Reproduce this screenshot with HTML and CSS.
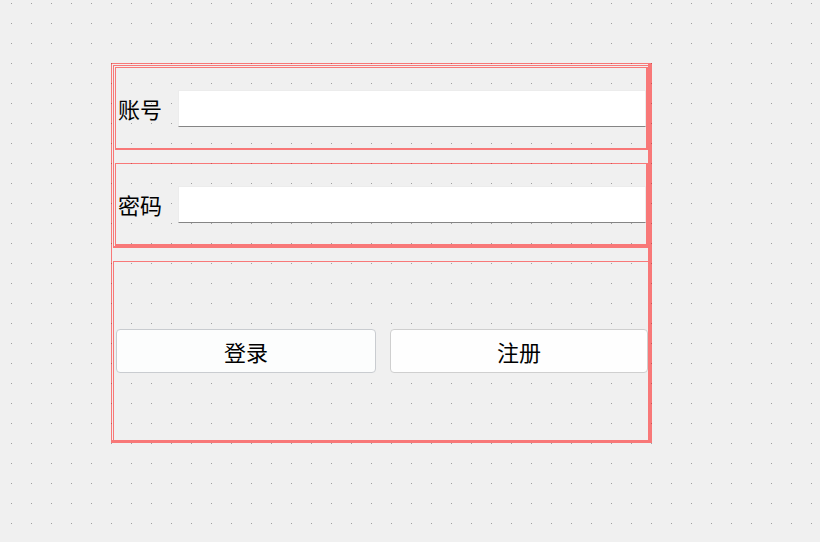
FILE: index.html
```html
<!DOCTYPE html>
<html lang="zh-CN">
<head>
<meta charset="utf-8">
<title>登录</title>
<link rel="stylesheet" href="styles.css">
</head>
<body>
<div class="form">
  <div class="group">
    <div class="row">
      <span class="label">账号</span>
      <input class="field" type="text">
    </div>
    <div class="row">
      <span class="label">密码</span>
      <input class="field" type="password">
    </div>
  </div>
  <div class="actions">
    <button class="btn btn-login" type="button">登录</button>
    <button class="btn btn-register" type="button">注册</button>
  </div>
</div>
</body>
</html>
```
FILE: styles.css
```css
html, body {
  margin: 0;
  padding: 0;
}
body {
  width: 820px;
  height: 542px;
  overflow: hidden;
  background-color: #f0f0f0;
  background-image:
    linear-gradient(to bottom, transparent 1px, #f0f0f0 1px),
    linear-gradient(to right, #a0a0a0 1px, transparent 1px);
  background-size: 20px 20px, 20px 20px;
  background-position: 11px 3px, 11px 3px;
  font-family: "Noto Sans CJK SC", "Noto Sans", sans-serif;
  color: #000;
}
.form {
  box-sizing: border-box;
  margin: 63px 0 0 111px;
  width: 541px;
  height: 380px;
  border-style: solid;
  border-color: rgba(255, 0, 0, 0.5);
  border-width: 1px 4px 3px 1px;
  padding: 1px 0 0 1px;
  display: flex;
  flex-direction: column;
}
.group {
  border-style: solid;
  border-color: rgba(255, 0, 0, 0.5);
  border-width: 1px 0 2px 1px;
  padding: 1px 0 0 1px;
  display: flex;
  flex-direction: column;
  gap: 13px;
}
.row {
  box-sizing: border-box;
  height: 83px;
  border-style: solid;
  border-color: rgba(255, 0, 0, 0.5);
  border-width: 1px 2px 2px 1px;
  padding: 0 0 0 2px;
  display: flex;
  align-items: center;
}
.label {
  width: 60px;
  flex: none;
  font-size: 22px;
  line-height: 26px;
  white-space: nowrap;
}
.field {
  box-sizing: border-box;
  flex: 1;
  min-width: 0;
  height: 37px;
  margin: 0;
  padding: 0 6px;
  background: #ffffff;
  border: 1px solid #ececec;
  border-bottom-color: #858585;
  border-radius: 0;
  outline: none;
  font-family: inherit;
  font-size: 16px;
}
.actions {
  flex: 1;
  margin-top: 13px;
  border-style: solid;
  border-color: rgba(255, 0, 0, 0.5);
  border-width: 1px 0 0 1px;
  padding: 0 0 0 2px;
  display: flex;
  align-items: center;
  gap: 14px;
}
.btn {
  box-sizing: border-box;
  height: 44px;
  margin: 0;
  padding: 0;
  border: 1px solid #cfcfcf;
  border-radius: 4px;
  font-family: inherit;
  font-size: 22px;
  color: #000;
  cursor: pointer;
}
.btn-login {
  width: 260px;
  background: #fcfdfd;
  border-color: #c9ccd0;
}
.btn-register {
  width: 258px;
  background: #fefefe;
}
```
